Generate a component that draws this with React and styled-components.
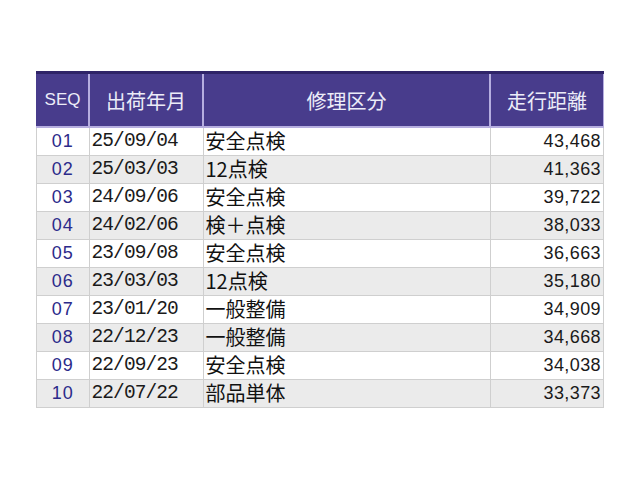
import React from 'react'
import styled, { createGlobalStyle } from 'styled-components'

const GlobalStyle = createGlobalStyle`
  html, body {
    margin: 0;
    padding: 0;
    background: #ffffff;
  }
`

const Page = styled.div`
  width: 640px;
  height: 480px;
  padding: 71px 0 0 36px;
  box-sizing: border-box;
`

const Table = styled.table`
  border-collapse: collapse;
  table-layout: fixed;
  width: 560px;
  font-family: "Noto Sans CJK JP", "DejaVu Sans", sans-serif;
  border-top: 3px solid #2f2468;
`

const HeadCell = styled.th`
  width: ${({ w }) => w}px;
  height: 52px;
  padding: 0;
  background: #483c8c;
  color: #ececf8;
  font-weight: normal;
  font-size: ${({ small }) => (small ? '17px' : '20px')};
  font-family: ${({ small }) =>
    small ? '"Liberation Sans", Arial, sans-serif' : '"Noto Sans CJK JP", sans-serif'};
  text-align: center;
  border-left: 2px solid #b6aee0;
  border-bottom: 2px solid #b6aee0;
  &:first-child {
    border-left: 1px solid #483c8c;
  }
  &:last-child {
    border-right: 1px solid #b6aee0;
  }
`

const Row = styled.tr`
  height: 28px;
  background: ${({ alt }) => (alt ? '#ebebeb' : '#ffffff')};
`

const Cell = styled.td`
  padding: 0 ${({ align }) => (align === 'right' ? '2px' : '0')} 0
    ${({ align }) => (align === 'left' ? '2px' : '0')};
  border: 1px solid #cfcfcf;
  font-size: 20px;
  line-height: 26px;
  color: #111111;
  text-align: ${({ align }) => align};
  white-space: nowrap;
  overflow: hidden;
`

const SeqCell = styled(Cell)`
  color: #2c2a8a;
  font-family: "Liberation Sans", Arial, sans-serif;
  font-size: 18px;
  letter-spacing: 1px;
`

const DateCell = styled(Cell)`
  font-family: "Liberation Mono", "DejaVu Sans Mono", monospace;
  font-size: 19.5px;
  letter-spacing: -0.9px;
  color: #1a1a1a;
`

const DistCell = styled(Cell)`
  font-family: "Liberation Sans", Arial, sans-serif;
  font-size: 18px;
  letter-spacing: 0.4px;
  color: #1a1a1a;
`

const rows = [
  ['01', '25/09/04', '安全点検', '43,468'],
  ['02', '25/03/03', '12点検', '41,363'],
  ['03', '24/09/06', '安全点検', '39,722'],
  ['04', '24/02/06', '検＋点検', '38,033'],
  ['05', '23/09/08', '安全点検', '36,663'],
  ['06', '23/03/03', '12点検', '35,180'],
  ['07', '23/01/20', '一般整備', '34,909'],
  ['08', '22/12/23', '一般整備', '34,668'],
  ['09', '22/09/23', '安全点検', '34,038'],
  ['10', '22/07/22', '部品単体', '33,373'],
]

export default function App() {
  return (
    <Page>
      <GlobalStyle />
      <Table>
        <thead>
          <tr>
            <HeadCell w={51} small>SEQ</HeadCell>
            <HeadCell w={112}>出荷年月</HeadCell>
            <HeadCell w={285}>修理区分</HeadCell>
            <HeadCell w={112}>走行距離</HeadCell>
          </tr>
        </thead>
        <tbody>
          {rows.map(([seq, date, kind, dist], i) => (
            <Row key={seq} alt={i % 2 === 1}>
              <SeqCell align="center">{seq}</SeqCell>
              <DateCell align="left">{date}</DateCell>
              <Cell align="left">{kind}</Cell>
              <DistCell align="right">{dist}</DistCell>
            </Row>
          ))}
        </tbody>
      </Table>
    </Page>
  )
}
